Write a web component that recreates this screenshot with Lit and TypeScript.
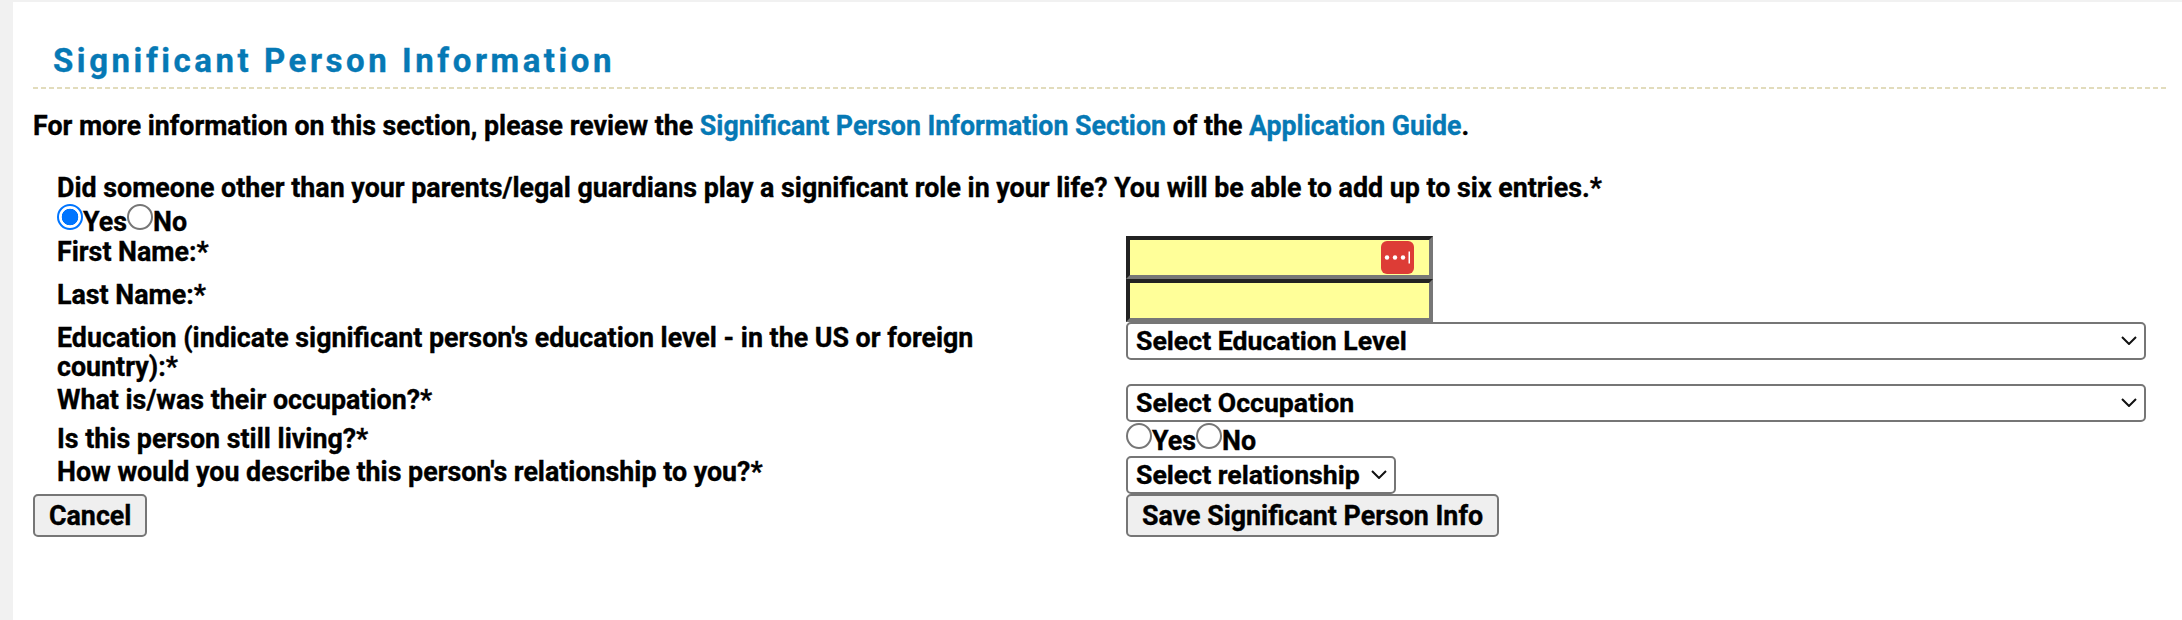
import { LitElement, html, css } from "lit";
import { customElement } from "lit/decorators.js";

const chevron = html`<svg class="chev" width="16" height="9" viewBox="0 0 16 9"><path d="M1 1l7 7 7-7" fill="none" stroke="#111" stroke-width="2"/></svg>`;

@customElement("app-root")
export class AppRoot extends LitElement {
  static styles = css`
    :host {
      display: block;
      height: 620px;
      box-sizing: border-box;
      background: #f1f1f1;
      padding: 2px 0 0 13px;
      font-family: Roboto, "Liberation Sans", sans-serif;
      font-weight: 700;
      font-size: 26.8px;
      color: #000;
      -webkit-text-stroke: 0.35px currentColor;
    }
    .page {
      background: #fff;
      height: 100%;
      padding: 0 15px 0 20px;
      box-sizing: border-box;
    }
    h1 {
      margin: 0;
      padding: 41px 0 0 20px;
      height: 85px;
      box-sizing: border-box;
      font-size: 33px;
      line-height: 36px;
      letter-spacing: 3.55px;
      color: #0679b5;
      font-weight: 700;
    }
    .rule {
      height: 2px;
      background: repeating-linear-gradient(90deg, #e2dcbc 0 5px, transparent 5px 8px);
    }
    .intro {
      margin: 0;
      padding-top: 21px;
      line-height: 33px;
      height: 53px;
      box-sizing: border-box;
      font-size: 26.72px;
    }
    a {
      color: #0679b5;
      text-decoration: none;
    }
    .form {
      padding-top: 31px;
    }
    .question {
      padding-left: 24px;
      line-height: 31px;
    }
    .choices {
      display: flex;
      align-items: flex-start;
      line-height: 28px;
    }
    .radio {
      appearance: none;
      width: 26px;
      height: 26px;
      margin: 0;
      flex: none;
      box-sizing: border-box;
      border: 2px solid #767676;
      border-radius: 50%;
      background: #fff;
    }
    .radio:checked {
      border-color: #0075ff;
      background: radial-gradient(circle, #0075ff 0 8px, #fff 8.6px);
    }
    .choices label {
      padding-top: 4px;
    }
    .top-choices {
      padding-left: 24px;
      height: 32px;
    }
    .row {
      display: grid;
      grid-template-columns: 1093px 1fr;
    }
    .lbl {
      padding: 2px 80px 0 24px;
      line-height: 29px;
    }
    .field {
      position: relative;
      display: flex;
      align-items: flex-start;
    }
    .text {
      width: 307px;
      height: 43px;
      box-sizing: border-box;
      border: 4px solid;
      border-color: #222 #777 #777 #222;
      background: #ffff99;
      padding: 0;
      margin: 0;
      border-radius: 0;
    }
    .sel {
      position: relative;
      display: block;
    }
    .chev {
      position: absolute;
      right: 9px;
      top: 14px;
      pointer-events: none;
    }
    select {
      appearance: none;
      display: block;
      font: inherit;
      font-size: 26.67px;
      color: #000;
      background-color: #fff;
      height: 38px;
      box-sizing: border-box;
      margin: 0;
      padding: 0 34px 0 8px;
      border: 2px solid #767676;
      border-radius: 5px;
    }
    .wide,
    .wide select {
      width: 1020px;
    }
    button {
      font: inherit;
      color: #000;
      height: 43px;
      box-sizing: border-box;
      margin: 0;
      padding: 0 14px;
      background: #efefef;
      border: 2px solid #767676;
      border-radius: 5px;
    }
    .pw {
      position: absolute;
      left: 255px;
      top: 5px;
      display: block;
    }
    .h43 { height: 43px; }
    .h62 { height: 62px; }
    .h39 { height: 39px; }
    .h33 { height: 33px; }
    .h38 { height: 38px; }
  `;

  render() {
    return html`
      <div class="page">
        <h1>Significant Person Information</h1>
        <div class="rule"></div>
        <p class="intro">
          For more information on this section, please review the
          <a href="#">Significant Person Information Section</a> of the
          <a href="#">Application Guide</a>.
        </p>
        <div class="form">
          <div class="question">
            Did someone other than your parents/legal guardians play a significant role in your life? You will be able to add up to six entries.*
          </div>
          <div class="choices top-choices">
            <input class="radio" type="radio" name="sig" checked /><label>Yes</label>
            <input class="radio" type="radio" name="sig" /><label>No</label>
          </div>
          <div class="row h43">
            <div class="lbl">First Name:*</div>
            <div class="field">
              <input class="text" type="text" />
              <svg class="pw" width="33" height="33" viewBox="0 0 33 33">
                <rect width="33" height="33" rx="6" fill="#dd3c36" />
                <circle cx="6" cy="16.5" r="2.2" fill="#fff" />
                <circle cx="14" cy="16.5" r="2.2" fill="#fff" />
                <circle cx="22" cy="16.5" r="2.2" fill="#fff" />
                <rect x="27.5" y="10.5" width="1.5" height="12" fill="#fff" />
              </svg>
            </div>
          </div>
          <div class="row h43">
            <div class="lbl">Last Name:*</div>
            <div class="field"><input class="text" type="text" /></div>
          </div>
          <div class="row h62">
            <div class="lbl">Education (indicate significant person's education level - in the US or foreign country):*</div>
            <div class="field">
              <div class="sel wide"><select><option>Select Education Level</option></select>${chevron}</div>
            </div>
          </div>
          <div class="row h39">
            <div class="lbl">What is/was their occupation?*</div>
            <div class="field">
              <div class="sel wide"><select><option>Select Occupation</option></select>${chevron}</div>
            </div>
          </div>
          <div class="row h33">
            <div class="lbl">Is this person still living?*</div>
            <div class="field choices">
              <input class="radio" type="radio" name="living" /><label>Yes</label>
              <input class="radio" type="radio" name="living" /><label>No</label>
            </div>
          </div>
          <div class="row h38">
            <div class="lbl">How would you describe this person's relationship to you?*</div>
            <div class="field">
              <div class="sel"><select><option>Select relationship</option></select>${chevron}</div>
            </div>
          </div>
          <div class="row">
            <div><button>Cancel</button></div>
            <div><button>Save Significant Person Info</button></div>
          </div>
        </div>
      </div>
    `;
  }
}
